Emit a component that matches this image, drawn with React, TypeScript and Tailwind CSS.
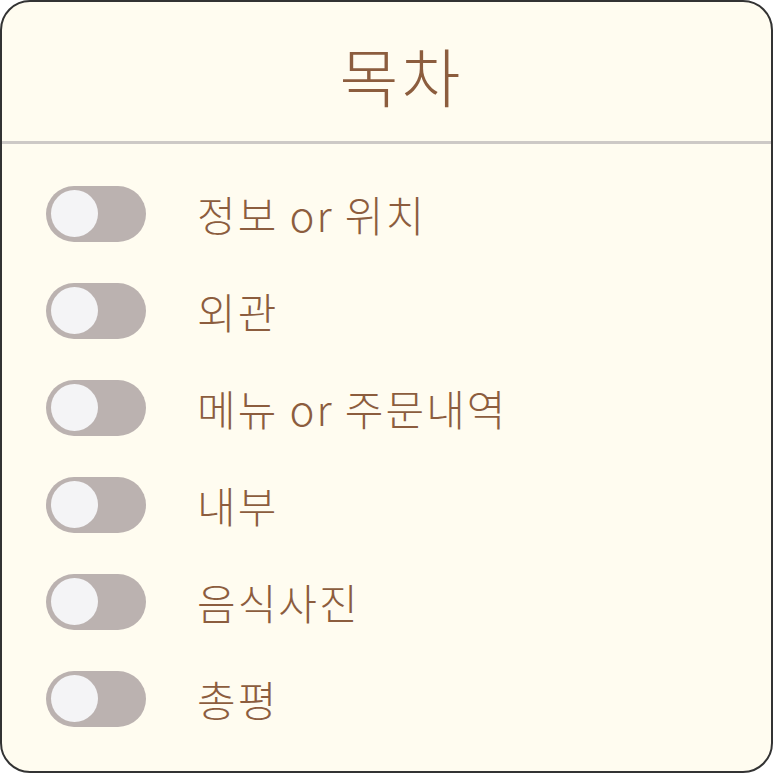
import React, { useState } from 'react';

const SECTIONS = ['정보 or 위치', '외관', '메뉴 or 주문내역', '내부', '음식사진', '총평'];

function Toggle({ on, onClick }: { on: boolean; onClick: () => void }) {
  return (
    <button
      type="button"
      onClick={onClick}
      className={`w-[100px] h-[56px] rounded-full p-[5px] flex items-center shrink-0 ${
        on ? 'bg-[#8c5d3e] justify-end' : 'bg-[#bbb2b0] justify-start'
      }`}
    >
      <span className="block w-[47px] h-[47px] rounded-full bg-[#f4f4f6]" />
    </button>
  );
}

export default function App() {
  const [checked, setChecked] = useState<boolean[]>(SECTIONS.map(() => false));

  const toggle = (i: number) => setChecked(prev => prev.map((v, j) => (j === i ? !v : v)));

  return (
    <div
      className="w-[773px] h-[773px] bg-[#fffcf0] border-2 border-[#333333] rounded-[30px] overflow-hidden flex flex-col text-[#8c5d3e]"
      style={{ fontFamily: '"Noto Sans CJK KR", "Noto Sans", sans-serif' }}
    >
      <div className="h-[142px] flex items-center justify-center pl-[30px] border-b-[3px] border-[#cdc9c6]">
        <h1 className="text-[64px] leading-none font-light tracking-[3px] pt-[4px]">목차</h1>
      </div>
      <ul className="flex flex-col pt-[21px] pl-[44px]">
        {SECTIONS.map((s, i) => (
          <li key={s} className="h-[97px] flex items-center gap-[51px]">
            <Toggle on={checked[i]} onClick={() => toggle(i)} />
            <span className="text-[42px] leading-none font-light tracking-[2px]">{s}</span>
          </li>
        ))}
      </ul>
    </div>
  );
}
